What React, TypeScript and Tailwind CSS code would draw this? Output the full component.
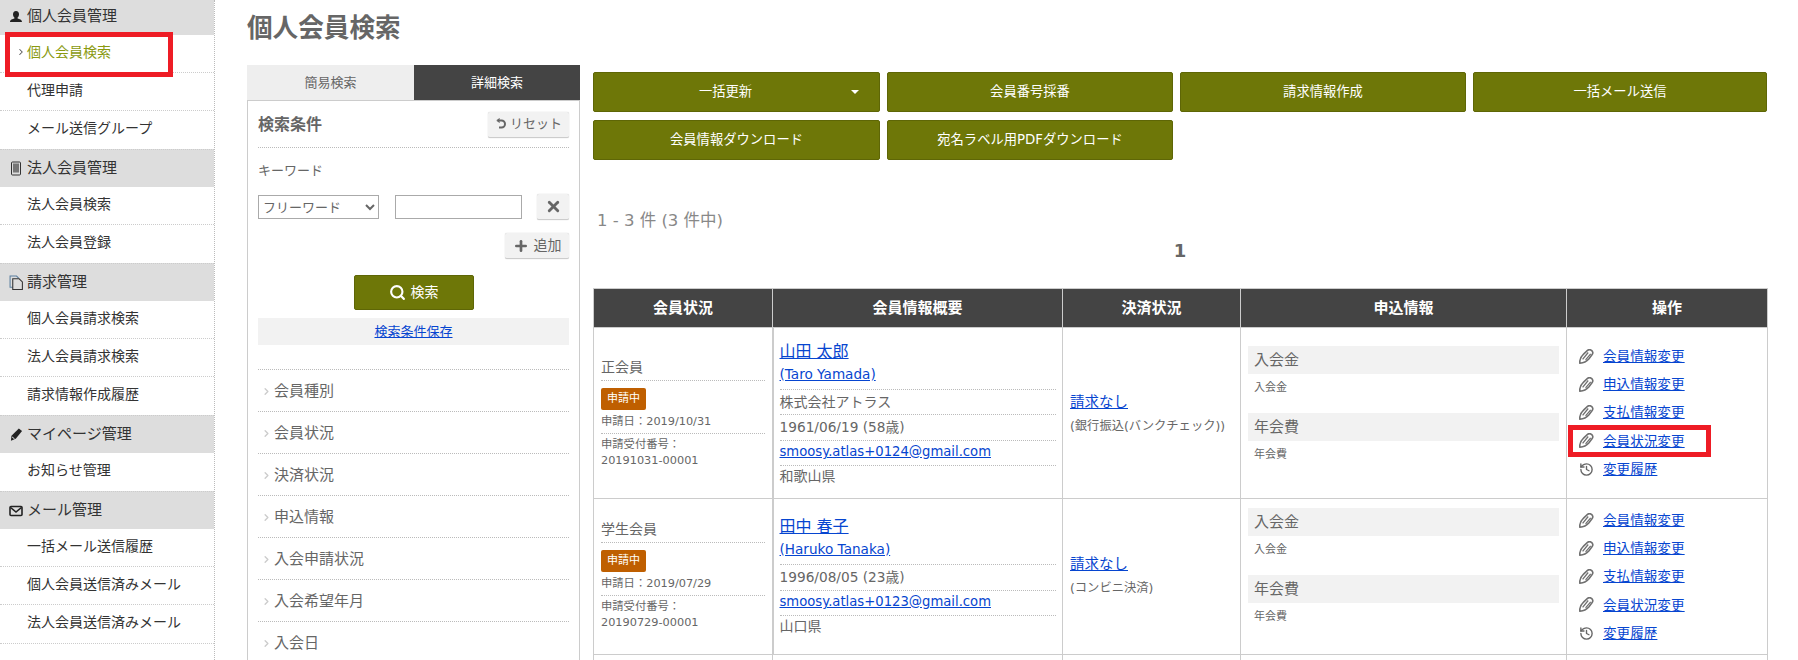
import { ChevronRight, History, Plus, Search, X } from "lucide-react";

const font = "font-['DejaVu_Sans','Noto_Sans_CJK_JP',sans-serif]";

function UserIcon() {
  return (
    <svg viewBox="0 0 14 14" className="h-[14px] w-[14px] fill-[#222]">
      <path d="M7 1c2 0 3 1.400 3 3.300 0 1.400-.6 2.700-1.400 3.300v1c1.800.6 4.400 1.200 4.400 3.400H1c0-2.200 2.600-2.800 4.400-3.400v-1C4.600 7 4 5.700 4 4.300 4 2.400 5 1 7 1z" />
    </svg>
  );
}

function PhoneIcon() {
  return (
    <svg viewBox="0 0 14 14" className="h-[15px] w-[14px]">
      <rect x="2.500" y="0.500" width="9" height="13" rx="1" className="fill-none stroke-[#333]" />
      <rect x="4" y="2" width="6" height="9" className="fill-[#777]" />
    </svg>
  );
}

function FilesIcon() {
  return (
    <svg viewBox="0 0 14 14" className="h-[15px] w-[15px] fill-none stroke-[#333]">
      <path d="M3.500 11.500h-2.500V1h6l2 2" className="stroke-[#5b7f9f]" />
      <path d="M3.500 3.500h6l3 3v7h-9z" />
    </svg>
  );
}

function PencilIcon() {
  return (
    <svg viewBox="0 0 14 14" className="h-[13px] w-[13px] fill-[#222]">
      <path d="M9.500.5l3.500 2.800-6.800 8.400-5.200 2 .6-5.300z" />
      <path d="M2.300 9.700l2.600 2" className="stroke-white" />
    </svg>
  );
}

function MailIcon() {
  return (
    <svg viewBox="0 0 14 12" className="h-[12px] w-[14px] fill-none stroke-[#222] stroke-[1.600]">
      <rect x="1" y="1.500" width="12" height="9" rx="1" />
      <path d="M1.500 2.500L7 7l5.500-4.500" />
    </svg>
  );
}

function PenIcon() {
  return (
    <svg viewBox="0 0 15 15" className="h-[15px] w-[15px] shrink-0 fill-none stroke-[#707070] stroke-[1.600]">
      <path d="M.9 14.200C.3 10.800 2 7.500 4.800 4.800l3.700-3.400c1.300-1 3-.9 4.300.2 1.200 1.300 1.200 3 .2 4.200L9.800 10c-2.400 2.800-5.200 4-8.900 4.200z" />
      <path d="M3.600 10.400L9.200 3.500M6.600 10.800L11.700 4.800" className="stroke-[1.300]" />
    </svg>
  );
}

function ResetIcon() {
  return (
    <svg viewBox="0 0 12 12" className="h-[12px] w-[12px] fill-none stroke-[#666] stroke-[2]">
      <path d="M3 2.500h3.500a3.500 3.500 0 0 1 0 7H4" />
      <path d="M4.500 .5L1.800 2.500 4.500 4.500" className="fill-[#666] stroke-[1]" />
    </svg>
  );
}

function SideGroup({
  icon,
  title,
  items,
  active,
}: {
  icon: React.ReactNode;
  title: string;
  items: string[];
  active?: string;
}) {
  return (
    <div>
      <div className="flex h-[38px] items-center border-t border-dotted border-[#ccc] bg-[#ddd] pl-[8px] text-[15px] text-[#333]">
        <span className="flex w-[19px] justify-center pr-[3px]">{icon}</span>
        {title}
      </div>
      <ul>
        {items.map((item) => (
          <li
            key={item}
            className={`relative flex h-[38px] items-center border-b border-dotted border-[#ccc] pb-[3px] pl-[27px] text-[14px] ${
              item === active ? "text-[#8a9a10]" : "text-[#333]"
            } last:border-b-0`}
          >
            {item === active && (
              <ChevronRight size={10} strokeWidth={2.5} className="absolute left-[16px] text-[#555]" />
            )}
            {item}
          </li>
        ))}
      </ul>
    </div>
  );
}

function Sidebar() {
  return (
    <aside className="h-[660px] w-[215px] shrink-0 overflow-hidden border-r border-dotted border-[#bbb]">
      <div className="-mt-[3px]">
        <SideGroup
          icon={<UserIcon />}
          title="個人会員管理"
          active="個人会員検索"
          items={["個人会員検索", "代理申請", "メール送信グループ"]}
        />
        <SideGroup icon={<PhoneIcon />} title="法人会員管理" items={["法人会員検索", "法人会員登録"]} />
        <SideGroup
          icon={<FilesIcon />}
          title="請求管理"
          items={["個人会員請求検索", "法人会員請求検索", "請求情報作成履歴"]}
        />
        <SideGroup icon={<PencilIcon />} title="マイページ管理" items={["お知らせ管理"]} />
        <SideGroup
          icon={<MailIcon />}
          title="メール管理"
          items={["一括メール送信履歴", "個人会員送信済みメール", "法人会員送信済みメール"]}
        />
        <div className="border-t border-dotted border-[#ccc]" />
      </div>
    </aside>
  );
}

function GrayButton({ className, children }: { className: string; children: React.ReactNode }) {
  return (
    <button
      className={`flex items-center justify-center rounded-[2px] border-b border-[#ccc] bg-[#f2f2f2] text-[#666] shadow-[0_0_1px_#bbb] ${className}`}
    >
      {children}
    </button>
  );
}

function SearchPanel() {
  const filters = ["会員種別", "会員状況", "決済状況", "申込情報", "入会申請状況", "入会希望年月", "入会日"];
  return (
    <section className="w-[333px] shrink-0">
      <div className="flex h-[35px] text-[13px]">
        <div className="flex w-[167px] items-center justify-center bg-[#eee] text-[#666]">簡易検索</div>
        <div className="flex flex-1 items-center justify-center bg-[#444] text-white">詳細検索</div>
      </div>
      <div className="h-[560px] border-x border-t border-[#ccc] px-[10px]">
        <div className="flex h-[47px] items-center justify-between border-b border-dotted border-[#bbb] pt-[1px]">
          <h3 className="text-[16px] font-bold text-[#666]">検索条件</h3>
          <GrayButton className="h-[26px] w-[81px] gap-[3px] text-[13px]">
            <ResetIcon />
            リセット
          </GrayButton>
        </div>
        <p className="pt-[14px] text-[13px] leading-[18px] text-[#666]">キーワード</p>
        <div className="mt-[14px] flex items-center">
          <select className="h-[24px] w-[121px] border border-[#aaa] bg-white text-[13px] text-[#666]">
            <option>フリーワード</option>
          </select>
          <input className="ml-[16px] h-[24px] w-[127px] border border-[#aaa] bg-white" />
          <GrayButton className="ml-[15px] h-[26px] w-[32px]">
            <X size={17} strokeWidth={4} />
          </GrayButton>
        </div>
        <div className="mt-[13px] flex justify-end">
          <GrayButton className="h-[26px] w-[64px] gap-[5px] text-[14px]">
            <Plus size={16} strokeWidth={4} />
            追加
          </GrayButton>
        </div>
        <div className="mt-[16px] flex justify-center">
          <button className="flex h-[35px] w-[120px] items-center justify-center gap-[5px] rounded-[2px] border border-[#5e6606] bg-[#6e7708] text-[14px] text-white">
            <Search size={17} strokeWidth={3} />
            検索
          </button>
        </div>
        <div className="mt-[8px] flex h-[27px] items-center justify-center bg-[#f2f2f2] text-[13px] text-[#0645d0] underline">
          検索条件保存
        </div>
        <ul className="mt-[24px] border-t border-dotted border-[#bbb]">
          {filters.map((f) => (
            <li
              key={f}
              className="relative flex h-[42px] items-center border-b border-dotted border-[#bbb] pt-[1px] pl-[16px] text-[15px] text-[#666]"
            >
              <ChevronRight size={11} strokeWidth={3} className="absolute left-[3px] text-[#ccc]" />
              {f}
            </li>
          ))}
        </ul>
      </div>
    </section>
  );
}

function ActionButton({ children, caret }: { children: React.ReactNode; caret?: boolean }) {
  return (
    <button
      className={`relative flex h-[40px] items-center justify-center rounded-[2px] border border-[#5e6606] bg-[#6e7708] text-[13.3px] text-white ${
        caret ? "pr-[22px]" : ""
      }`}
    >
      {children}
      {caret && (
        <span className="absolute right-[20px] h-0 w-0 border-x-[4px] border-t-[4px] border-x-transparent border-t-white" />
      )}
    </button>
  );
}

type Member = {
  status: string;
  date: string;
  no: string;
  name: string;
  kana: string;
  company?: string;
  birth: string;
  email: string;
  pref: string;
  pay: string;
  rowClass: string;
  statusPad: string;
  infoPad: string;
  payPad: string;
  applyPad: string;
  actionPad: string;
};

const members: Member[] = [
  {
    status: "正会員",
    date: "申請日：2019/10/31",
    no: "20191031-00001",
    name: "山田 太郎",
    kana: "(Taro Yamada)",
    company: "株式会社アトラス",
    birth: "1961/06/19 (58歳)",
    email: "smoosy.atlas+0124@gmail.com",
    pref: "和歌山県",
    pay: "(銀行振込(バンクチェック))",
    rowClass: "h-[171px]",
    statusPad: "pt-[27px]",
    infoPad: "pt-[13px]",
    payPad: "pt-[64px]",
    applyPad: "pt-[18px]",
    actionPad: "pt-[14px]",
  },
  {
    status: "学生会員",
    date: "申請日：2019/07/29",
    no: "20190729-00001",
    name: "田中 春子",
    kana: "(Haruko Tanaka)",
    birth: "1996/08/05 (23歳)",
    email: "smoosy.atlas+0123@gmail.com",
    pref: "山口県",
    pay: "(コンビニ決済)",
    rowClass: "h-[156px]",
    statusPad: "pt-[18px]",
    infoPad: "pt-[17px]",
    payPad: "pt-[55px]",
    applyPad: "pt-[9px]",
    actionPad: "pt-[7px]",
  },
];

const actions = ["会員情報変更", "申込情報変更", "支払情報変更", "会員状況変更"];
const dotted = "border-b border-dotted border-[#bbb]";
const link = "text-[#0645d0] underline";

function MemberRow({ m }: { m: Member }) {
  return (
    <tr className={m.rowClass}>
      <td className={`border-y border-l border-r-2 border-[#ccc] px-[7px] align-top ${m.statusPad}`}>
        <p className={`${dotted} h-[26px] text-[14px] leading-[24px] text-[#666]`}>{m.status}</p>
        <span className="mt-[7px] flex h-[22px] w-[45px] items-center justify-center rounded-[2px] bg-[#bf5f00] text-[11px] text-white">
          申請中
        </span>
        <p className={`${dotted} h-[24px] pt-[4px] text-[11.3px] leading-[16px] text-[#666]`}>{m.date}</p>
        <p className="pt-[3px] text-[11.3px] leading-[16px] text-[#666]">申請受付番号：</p>
        <p className="text-[11.3px] leading-[16px] text-[#666]">{m.no}</p>
      </td>
      <td className={`border border-[#ccc] px-[6px] align-top ${m.infoPad}`}>
        <div className={`${dotted} pb-[3px]`}>
          <p className={`${link} text-[16px] leading-[22px]`}>{m.name}</p>
          <p className={`${link} text-[13.6px] leading-[23px]`}>{m.kana}</p>
        </div>
        {m.company && <p className={`${dotted} h-[25px] text-[14px] leading-[24px] text-[#666]`}>{m.company}</p>}
        <p className={`${dotted} h-[26px] text-[13.7px] leading-[24px] text-[#666]`}>{m.birth}</p>
        <p className={`${dotted} h-[25px] text-[13.2px] leading-[22px]`}>
          <span className={link}>{m.email}</span>
        </p>
        <p className="text-[14px] leading-[21px] text-[#666]">{m.pref}</p>
      </td>
      <td className={`border border-[#ccc] px-[7px] align-top ${m.payPad}`}>
        <p className={`${link} text-[14.500px] leading-[20px]`}>請求なし</p>
        <p className="pt-[4px] text-[12.3px] leading-[20px] text-[#666]">{m.pay}</p>
      </td>
      <td className={`border border-[#ccc] px-[7px] align-top ${m.applyPad}`}>
        <p className="flex h-[28px] items-center bg-[#f2f2f2] px-[6px] text-[15px] text-[#666]">入会金</p>
        <p className="h-[39px] px-[6px] pt-[6px] text-[11px] leading-[16px] text-[#666]">入会金</p>
        <p className="flex h-[28px] items-center bg-[#f2f2f2] px-[6px] text-[15px] text-[#666]">年会費</p>
        <p className="px-[6px] pt-[6px] text-[11px] leading-[16px] text-[#666]">年会費</p>
      </td>
      <td className={`border border-[#ccc] pl-[12px] align-top ${m.actionPad}`}>
        {actions.map((a) => (
          <p key={a} className="flex h-[28.25px] items-center gap-[9px] text-[13.6px]">
            <PenIcon />
            <span className={link}>{a}</span>
          </p>
        ))}
        <p className="flex h-[28.25px] items-center gap-[9px] text-[13.6px]">
          <History size={15} strokeWidth={2.2} className="shrink-0 text-[#666]" />
          <span className={link}>変更履歴</span>
        </p>
      </td>
    </tr>
  );
}

function MemberTable() {
  const heads = [
    ["会員状況", "w-[179px]"],
    ["会員情報概要", "w-[290px]"],
    ["決済状況", "w-[178px]"],
    ["申込情報", "w-[326px]"],
    ["操作", "w-[201px]"],
  ];
  return (
    <table className="w-[1174px] table-fixed border-collapse">
      <thead>
        <tr className="h-[39px]">
          {heads.map(([label, w]) => (
            <th key={label} className={`${w} border border-[#ccc] bg-[#444] text-[15px] font-bold text-white`}>
              {label}
            </th>
          ))}
        </tr>
      </thead>
      <tbody>
        {members.map((m) => (
          <MemberRow key={m.no} m={m} />
        ))}
        <tr className="h-[40px]">
          {heads.map(([label]) => (
            <td key={label} className="border border-[#ccc]" />
          ))}
        </tr>
      </tbody>
    </table>
  );
}

export default function App() {
  return (
    <div className={`relative flex h-[660px] w-[1798px] overflow-hidden bg-white ${font}`}>
      <Sidebar />
      <main className="min-w-0 flex-1 pl-[32px]">
        <h1 className="flex h-[65px] items-center pb-[9px] text-[25.6px] font-bold text-[#666]">個人会員検索</h1>
        <div className="flex items-start gap-[13px]">
          <SearchPanel />
          <div className="w-[1174px] pt-[7px]">
            <div className="grid grid-cols-[287px_286px_286px_1fr] gap-x-[7px] gap-y-[8px]">
              <ActionButton caret>一括更新</ActionButton>
              <ActionButton>会員番号採番</ActionButton>
              <ActionButton>請求情報作成</ActionButton>
              <ActionButton>一括メール送信</ActionButton>
              <ActionButton>会員情報ダウンロード</ActionButton>
              <ActionButton>宛名ラベル用PDFダウンロード</ActionButton>
            </div>
            <p className="mt-[51px] pl-[4px] text-[16.500px] leading-[20px] text-[#888]">1 - 3 件 (3 件中)</p>
            <p className="mt-[6px] text-center text-[18px] leading-[28px] font-bold text-[#666]">1</p>
            <div className="mt-[23px]">
              <MemberTable />
            </div>
          </div>
        </div>
      </main>
      <div className="absolute top-[32px] left-[5px] h-[45px] w-[168px] border-[5px] border-[#ee1c25]" />
      <div className="absolute top-[425px] left-[1568px] h-[32px] w-[143px] border-[5px] border-[#ee1c25]" />
    </div>
  );
}
